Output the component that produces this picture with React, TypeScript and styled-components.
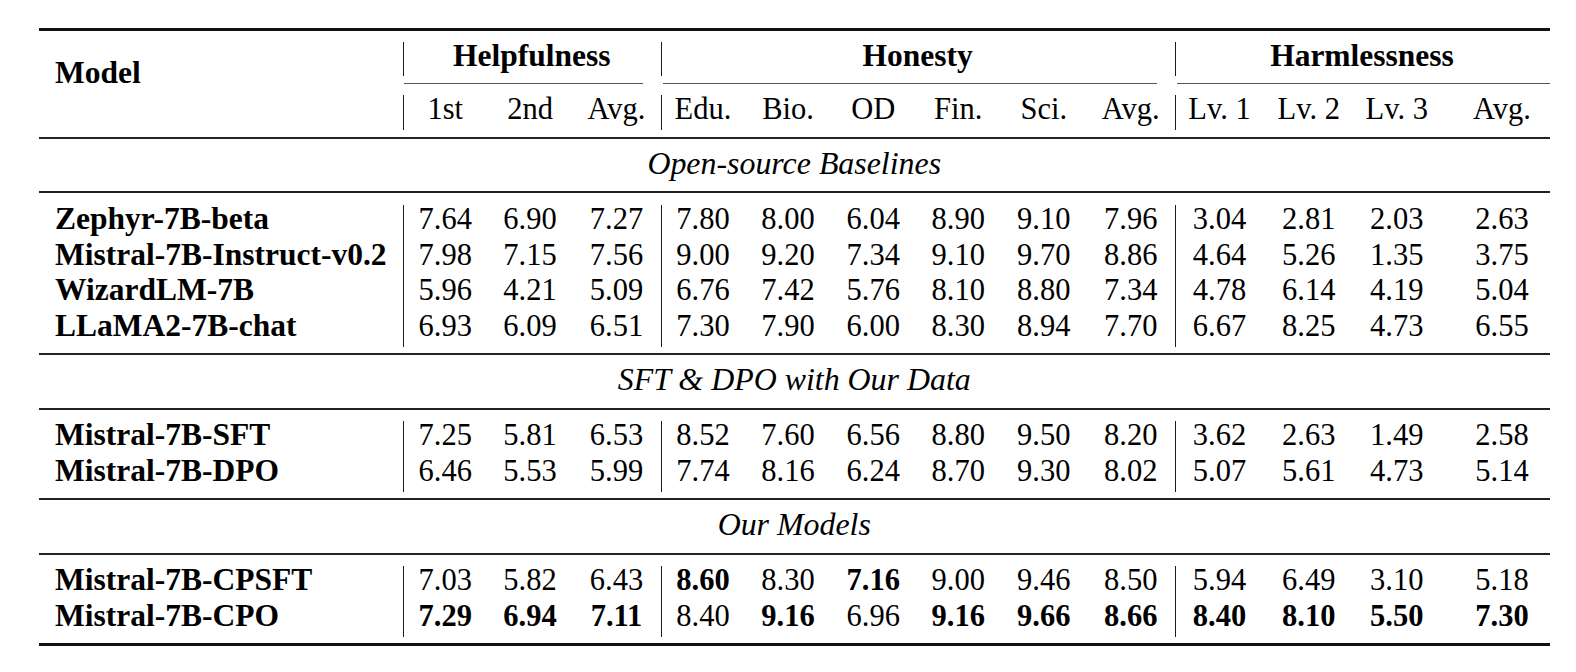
import React from "react";
import styled, { createGlobalStyle } from "styled-components";

const GlobalStyle = createGlobalStyle`
  html, body { margin: 0; padding: 0; background: #fff; }
  body { font-family: "Liberation Serif", "Times New Roman", serif; }
`;

const Page = styled.div`
  padding: 28px 0 0 39px;
`;

const Table = styled.table`
  table-layout: fixed;
  width: 1510px;
  border-collapse: separate;
  border-spacing: 0;
  font-family: "Liberation Serif", "Times New Roman", serif;
  font-size: 30.5px;
  color: #000;
`;

const Col = styled.col<{ $w: number }>`
  width: ${(p) => p.$w}px;
`;

const Row = styled.tr<{ $h: number }>`
  height: ${(p) => p.$h}px;
`;

const Cell = styled.td<{ $bar?: boolean; $bold?: boolean; $pl?: number }>`
  vertical-align: top;
  line-height: 28.4px;
  padding: 0 0 0 ${(p) => p.$pl ?? 0}px;
  text-align: center;
  white-space: nowrap;
  font-weight: ${(p) => (p.$bold ? 700 : 400)};
  box-shadow: ${(p) => (p.$bar ? "inset 1px 0 0 #1a1a1a" : "none")};
`;

const ModelCell = styled(Cell)`
  padding-left: 16px;
  text-align: left;
  font-weight: 700;
  font-size: 31.5px;
`;

const ModelHead = styled(ModelCell)`
  padding-top: 17px;
`;

const GroupHead = styled(Cell)`
  font-weight: 700;
  font-size: 31.5px;
`;

const SectionLabel = styled.td`
  vertical-align: top;
  line-height: 28.4px;
  padding: 0;
  text-align: center;
  font-style: italic;
  font-size: 31.9px;
  white-space: nowrap;
`;

const Gap = styled.td`
  padding: 0;
  font-size: 0;
  line-height: 0;
`;

const RuleCell = styled.td`
  padding: 0;
  font-size: 0;
  line-height: 0;
`;

const RuleLine = styled.div<{ $w: number; $c: string; $ml?: number; $mr?: number }>`
  height: ${(p) => p.$w}px;
  background: ${(p) => p.$c};
  margin-left: ${(p) => p.$ml ?? 0}px;
  margin-right: ${(p) => p.$mr ?? 0}px;
`;

const COLS = 14;
const BAR_COLS = new Set([0, 3, 9]);
const COL_WIDTHS = [364, 84.5, 85, 88, 85, 85, 85.5, 84.5, 86.5, 87.5, 90, 88.5, 87.5, 109];
const LAST_PAD = 14;

type Section = { label: string; rows: { name: string; vals: string[] }[] };

const sections: Section[] = [
  {
    label: "Open-source Baselines",
    rows: [
      { name: "Zephyr-7B-beta", vals: "7.64 6.90 7.27 7.80 8.00 6.04 8.90 9.10 7.96 3.04 2.81 2.03 2.63".split(" ") },
      { name: "Mistral-7B-Instruct-v0.2", vals: "7.98 7.15 7.56 9.00 9.20 7.34 9.10 9.70 8.86 4.64 5.26 1.35 3.75".split(" ") },
      { name: "WizardLM-7B", vals: "5.96 4.21 5.09 6.76 7.42 5.76 8.10 8.80 7.34 4.78 6.14 4.19 5.04".split(" ") },
      { name: "LLaMA2-7B-chat", vals: "6.93 6.09 6.51 7.30 7.90 6.00 8.30 8.94 7.70 6.67 8.25 4.73 6.55".split(" ") },
    ],
  },
  {
    label: "SFT & DPO with Our Data",
    rows: [
      { name: "Mistral-7B-SFT", vals: "7.25 5.81 6.53 8.52 7.60 6.56 8.80 9.50 8.20 3.62 2.63 1.49 2.58".split(" ") },
      { name: "Mistral-7B-DPO", vals: "6.46 5.53 5.99 7.74 8.16 6.24 8.70 9.30 8.02 5.07 5.61 4.73 5.14".split(" ") },
    ],
  },
  {
    label: "Our Models",
    rows: [
      { name: "Mistral-7B-CPSFT", vals: "7.03 5.82 6.43 *8.60 8.30 *7.16 9.00 9.46 8.50 5.94 6.49 3.10 5.18".split(" ") },
      { name: "Mistral-7B-CPO", vals: "*7.29 *6.94 *7.11 8.40 *9.16 6.96 *9.16 *9.66 *8.66 *8.40 *8.10 *5.50 *7.30".split(" ") },
    ],
  },
];

const subHeads = ["1st", "2nd", "Avg.", "Edu.", "Bio.", "OD", "Fin.", "Sci.", "Avg.", "Lv. 1", "Lv. 2", "Lv. 3", "Avg."];

const Spacer = ({ h, span = COLS }: { h: number; span?: number }) => (
  <Row $h={h}>
    <Gap colSpan={span} />
  </Row>
);

const Rule = ({ w, c }: { w: number; c: string }) => (
  <tr>
    <RuleCell colSpan={COLS}>
      <RuleLine $w={w} $c={c} />
    </RuleCell>
  </tr>
);

const sectionGaps = [
  { labelBelow: 6, top: 12, bottom: 6 },
  { labelBelow: 7, top: 11, bottom: 6 },
  { labelBelow: 7, top: 11, bottom: 6 },
];

export default function App() {
  return (
    <>
      <GlobalStyle />
      <Page>
        <Table>
          <colgroup>
            {COL_WIDTHS.map((w, i) => (
              <Col key={i} $w={w} />
            ))}
          </colgroup>
          <tbody>
            <Rule w={3} c="#111" />
            <Spacer h={11} />
            <Row $h={34}>
              <ModelHead rowSpan={5}>Model</ModelHead>
              <GroupHead colSpan={3} $bar>Helpfulness</GroupHead>
              <GroupHead colSpan={6} $bar>Honesty</GroupHead>
              <GroupHead colSpan={4} $bar>Harmlessness</GroupHead>
            </Row>
            <Spacer h={7} span={13} />
            <tr>
              <RuleCell colSpan={3}>
                <RuleLine $w={1} $c="#555" $ml={1} $mr={18} />
              </RuleCell>
              <RuleCell colSpan={6}>
                <RuleLine $w={1} $c="#555" $ml={2} $mr={18} />
              </RuleCell>
              <RuleCell colSpan={4}>
                <RuleLine $w={1} $c="#555" $ml={2} />
              </RuleCell>
            </tr>
            <Spacer h={11} span={13} />
            <Row $h={35}>
              {subHeads.map((s, i) => (
                <Cell key={i} $bar={BAR_COLS.has(i)} $pl={i === 12 ? LAST_PAD : 0}>
                  {s}
                </Cell>
              ))}
            </Row>
            <Spacer h={7} />
            {sections.map((sec, si) => (
              <React.Fragment key={sec.label}>
                <Rule w={2} c="#222" />
                <Spacer h={11} />
                <Row $h={35}>
                  <SectionLabel colSpan={COLS}>{sec.label}</SectionLabel>
                </Row>
                <Spacer h={sectionGaps[si].labelBelow} />
                <Rule w={2} c="#222" />
                <Spacer h={sectionGaps[si].top} />
                {sec.rows.map((r) => (
                  <Row $h={35.5} key={r.name}>
                    <ModelCell>{r.name}</ModelCell>
                    {r.vals.map((v, i) => (
                      <Cell
                        key={i}
                        $bar={BAR_COLS.has(i)}
                        $bold={v.startsWith("*")}
                        $pl={i === 12 ? LAST_PAD : 0}
                      >
                        {v.replace("*", "")}
                      </Cell>
                    ))}
                  </Row>
                ))}
                <Spacer h={sectionGaps[si].bottom} />
              </React.Fragment>
            ))}
            <Rule w={3} c="#111" />
          </tbody>
        </Table>
      </Page>
    </>
  );
}
